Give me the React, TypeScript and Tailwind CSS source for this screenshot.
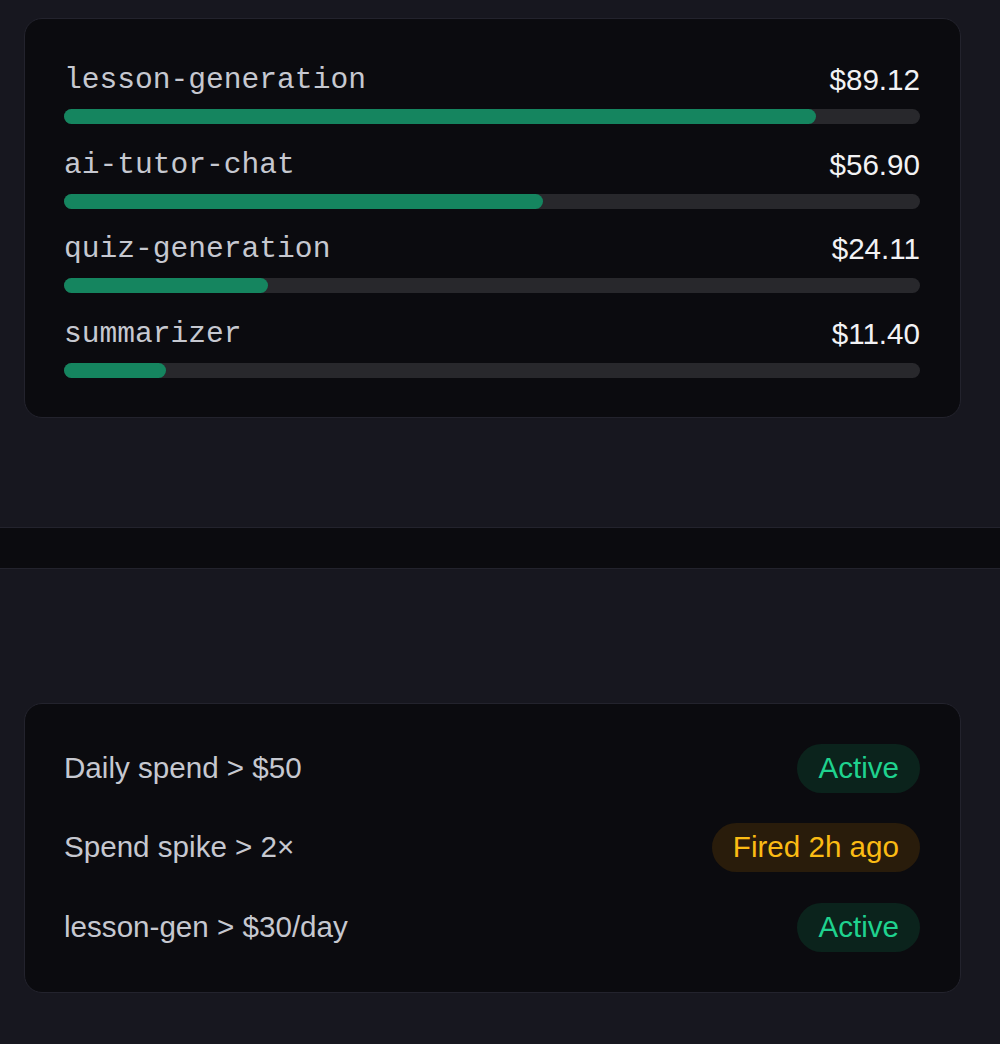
const usage = [
  { name: 'lesson-generation', cost: 89.12, pct: 87.8 },
  { name: 'ai-tutor-chat', cost: 56.9, pct: 56 },
  { name: 'quiz-generation', cost: 24.11, pct: 23.8 },
  { name: 'summarizer', cost: 11.4, pct: 11.9 },
];

const alerts = [
  { rule: 'Daily spend > $50', status: 'Active', fired: false },
  { rule: 'Spend spike > 2×', status: 'Fired 2h ago', fired: true },
  { rule: 'lesson-gen > $30/day', status: 'Active', fired: false },
];

const App = () => {
  return (
    <div className="min-h-screen bg-[#17171f] pt-[18px] pb-10 font-['Liberation_Sans',Arial,sans-serif]">
      {/* Usage by feature */}
      <div className="ml-6 mr-[39px] rounded-[18px] border border-[#23232d] bg-[#0b0b0f] pl-[39px] pr-10 pt-10 pb-[39px]">
        <div className="flex flex-col gap-[19.5px]">
          {usage.map((u) => (
            <div key={u.name}>
              <div className="flex items-center justify-between leading-[42px]">
                <span className="font-['Liberation_Mono','Courier_New',monospace] text-[29.6px] text-[#c6c8d0]">
                  {u.name}
                </span>
                <span className="text-[29.6px] text-[#f2f2f4]">${u.cost.toFixed(2)}</span>
              </div>
              <div className="mt-2 h-[15px] w-full rounded-full bg-[#28282c]">
                <div className="h-full rounded-full bg-[#15855f]" style={{ width: `${u.pct}%` }} />
              </div>
            </div>
          ))}
        </div>
      </div>

      {/* Divider band */}
      <div className="mt-[109px] h-[42px] border-y border-[#23232d] bg-[#0b0b0f]" />

      {/* Alerts */}
      <div className="ml-6 mr-[39px] mt-[134px] rounded-[18px] border border-[#23232d] bg-[#0b0b0f] pl-[39px] pr-10 py-10">
        <div className="flex flex-col gap-[30.5px]">
          {alerts.map((a) => (
            <div key={a.rule} className="flex h-[49px] items-center justify-between">
              <span className="text-[29.6px] text-[#c6c8d0]">{a.rule}</span>
              <span
                className={`flex h-[49px] items-center rounded-full px-[21px] text-[29.6px] ${
                  a.fired ? 'bg-[#291c0b] text-[#fbbb14]' : 'bg-[#0b231c] text-[#1fd28e]'
                }`}
              >
                {a.status}
              </span>
            </div>
          ))}
        </div>
      </div>
    </div>
  );
};

export default App;
